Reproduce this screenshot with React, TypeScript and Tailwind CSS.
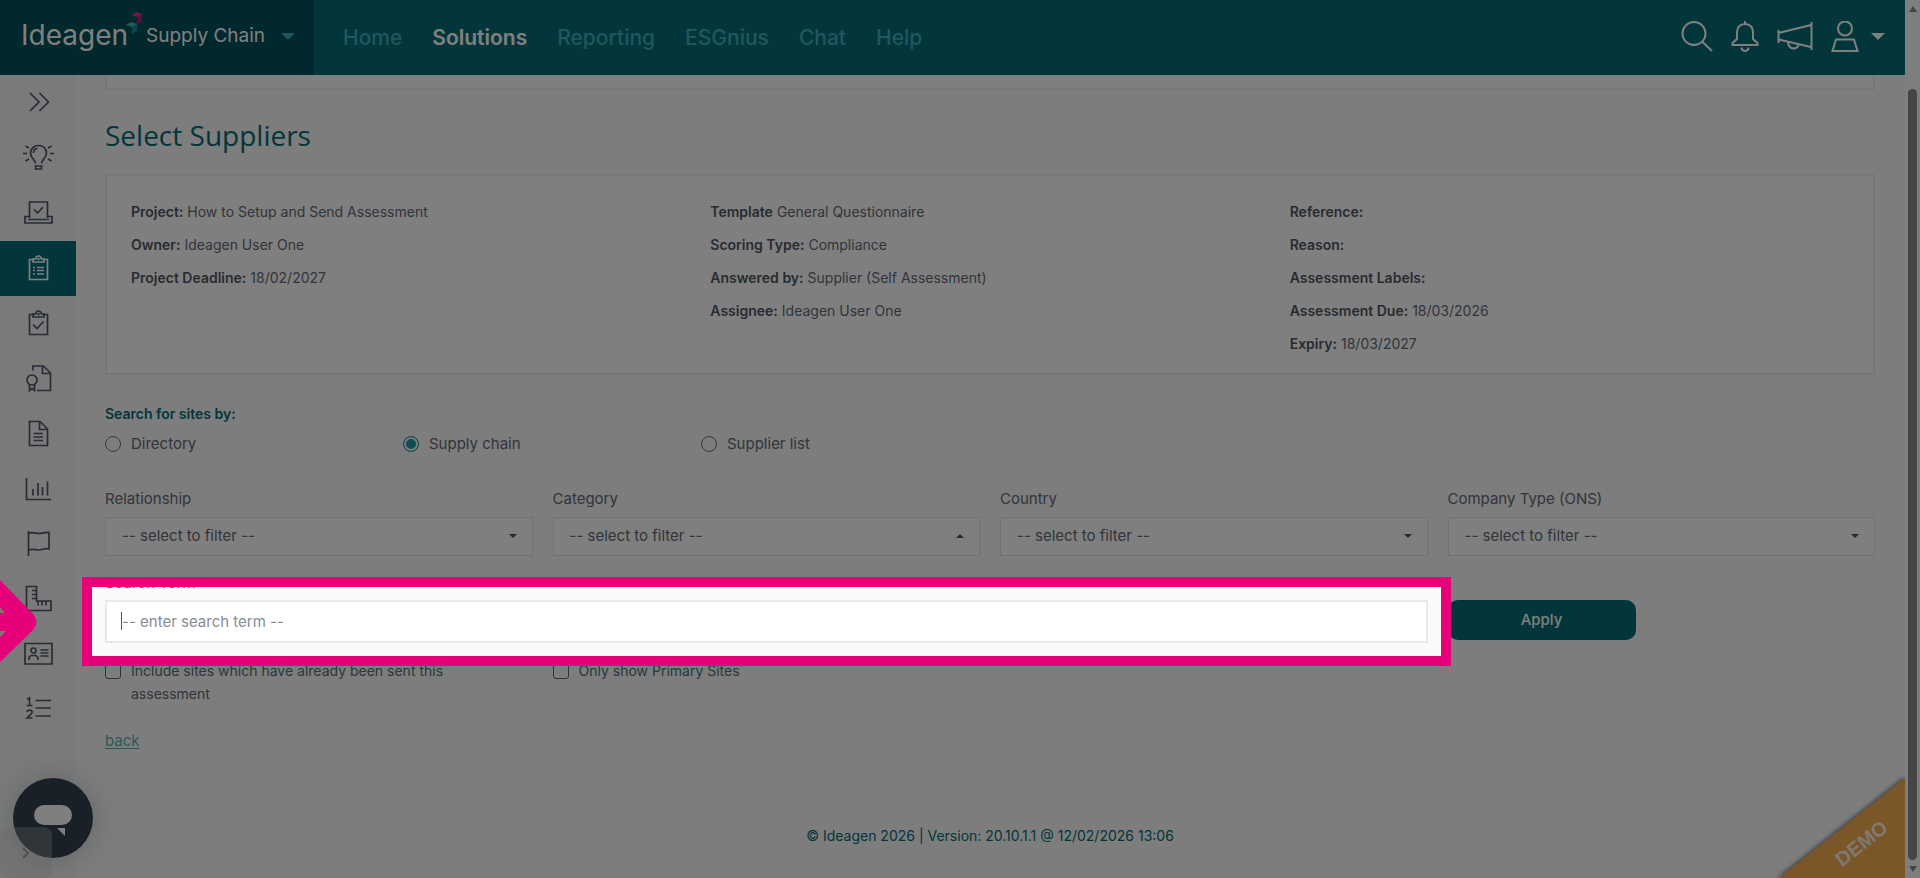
import React from "react";

const navLinks = ["Home", "Solutions", "Reporting", "ESGnius", "Chat", "Help"];

const details = [
  [
    { label: "Project:", value: "How to Setup and Send Assessment" },
    { label: "Owner:", value: "Ideagen User One" },
    { label: "Project Deadline:", value: "18/02/2027" },
  ],
  [
    { label: "Template", value: "General Questionnaire" },
    { label: "Scoring Type:", value: "Compliance" },
    { label: "Answered by:", value: "Supplier (Self Assessment)" },
    { label: "Assignee:", value: "Ideagen User One" },
  ],
  [
    { label: "Reference:", value: "" },
    { label: "Reason:", value: "" },
    { label: "Assessment Labels:", value: "" },
    { label: "Assessment Due:", value: "18/03/2026" },
    { label: "Expiry:", value: "18/03/2027" },
  ],
];

const filters = [
  { id: "relationship", label: "Relationship", open: false },
  { id: "category", label: "Category", open: true },
  { id: "country", label: "Country", open: false },
  { id: "company-type", label: "Company Type (ONS)", open: false },
];

const searchModes = ["Directory", "Supply chain", "Supplier list"];

const clipboardOutline = (
  <>
    <path d="M11 6.5H6.5v20h18v-20H20" />
    <path d="M10 9V6h2.5c.5-2.5 1.500-3 3-3s2.500.5 3 3H21v3z" />
    <circle cx="15.500" cy="6" r=".5" />
  </>
);

const sideItems = [
  {
    name: "Expand menu",
    icon: <path d="M7 5l9 9-9 9M16.500 5l9 9-9 9" />,
  },
  {
    name: "Insights",
    icon: (
      <>
        <path d="M12.500 20.500c0-4-5-5-5-10.500C7.500 5.500 11 2.500 15.500 2.500s8 3 8 7.500c0 5.500-5 6.500-5 10.500" />
        <path d="M10.500 10c0-2.500 1.500-4.500 4-4.500" />
        <path d="M12.500 23h6v3h-6z" />
        <path d="M0 10.500h4M27 10.500h4M2.500 3l3.500 2M28.500 3l-3.500 2M2.500 18l3.500-2M28.500 18l-3.500-2" />
      </>
    ),
  },
  {
    name: "Self assessment",
    icon: (
      <>
        <path d="M6.500 20V4h18v16" />
        <path d="M6 18.500H2V25h27v-6.500h-4.500M5 21.500h21" />
        <path d="M11 11.500l3.500 3.500 5.500-6" />
      </>
    ),
  },
  {
    name: "Assessments",
    icon: (
      <>
        {clipboardOutline}
        <path d="M10 14.500h2M14 14.500h7M10 17.500h2M14 17.500h7M10 21h2M14 21h7" />
      </>
    ),
  },
  {
    name: "Actions",
    icon: (
      <>
        {clipboardOutline}
        <path d="M10 16.500l4 4 6.500-7" />
      </>
    ),
  },
  {
    name: "Certificates",
    icon: (
      <>
        <path d="M10 7.500V3h10.500l7 7v17.500H14" />
        <path d="M19.500 3v7.500h8" />
        <circle cx="9" cy="17" r="5" />
        <path d="M6.500 21.500v6l2.500-2 2.500 2v-6" />
      </>
    ),
  },
  {
    name: "Documents",
    icon: (
      <>
        <path d="M6.500 3.500h10.500l7.500 7.500v16.500h-18z" />
        <path d="M16.500 3.500v8h8M10.500 15.500h9.500M10.500 19h9.500M10.500 22.500h9.500" />
      </>
    ),
  },
  {
    name: "Reports",
    icon: <path d="M3.500 5v21.500H28M10 16v6.500M15 10v12.500M19.500 14v8.500M24.500 8.500v14" />,
  },
  {
    name: "Flags",
    icon: (
      <path d="M5.500 3v25M5.500 5.500c4-2 7 0 10.500 0s6-1.500 10-1v16.500c-4-1.500-6.500 1-10 1s-6-1.500-10.500 0" />
    ),
  },
  {
    name: "Metrics",
    icon: (
      <>
        <path d="M3.500 3.500h10v14.500h14.500v9.500h-24.500z" />
        <path d="M9 7.500h4.500M9 11.500h4.500M9 15.500h4.500M15 18v4.500M19 18v4.500M23 18v4.500" />
      </>
    ),
  },
  {
    name: "Contacts",
    icon: (
      <>
        <path d="M2 5.500h27v20.500H2z" />
        <circle cx="10.500" cy="12.500" r="2.500" />
        <path d="M6 22v-2.500l2-2h5l2 2V22M17.500 12h8M17.500 15h8M17.500 18h8" />
      </>
    ),
  },
  {
    name: "Ordered list",
    icon: (
      <>
        <path d="M12.500 7.500h15.500M12.500 15h15.500M12.500 23h15.500" />
        <path d="M4 6.500l2.500-1.500V12.500M3.500 12.500h6M4 19c.5-2.500 5-2.500 5 0 0 2-2.500 3.500-5 6h5.500" />
      </>
    ),
  },
];

const SearchRow: React.FC = () => (
  <div className="mt-[5px] grid grid-cols-4 gap-x-5">
    <div className="relative col-span-3">
      <input
        id="search-term"
        type="text"
        placeholder="-- enter search term --"
        className="block h-[43px] w-full border-2 border-[#e6eaea] bg-white px-[15px] text-[15px] text-[#4b5563] outline-none placeholder:text-[#868d97]"
      />
      <span className="absolute left-4 top-3 h-[18px] w-px bg-[#4b5563]"></span>
      {/* spotlight: the ring's own shadow dims the rest of the page */}
      <div className="pointer-events-none absolute -inset-[23px] z-50 border-[10px] border-[#e6007a] shadow-[0_0_0_9999px_rgba(0,0,0,0.5)]"></div>
      <svg
        className="pointer-events-none absolute -left-[105px] -top-5 z-50 h-[82px] w-10"
        viewBox="0 0 40 82"
        fill="#e6007a"
        aria-hidden="true"
      >
        <path d="M0 0l33 34q7 8 0 16L0 82V57l6-6H0V33h5L0 27z" />
      </svg>
    </div>
    <button
      type="button"
      className="h-10 w-[188px] rounded-[10px] bg-[#066c76] text-[15px] font-medium text-white"
    >
      Apply
    </button>
  </div>
);

const App: React.FC = () => {
  return (
    <div className="flex h-screen overflow-hidden bg-[#fafafa] font-['Inter',sans-serif] text-[15px] text-[#626a77]">
      <div className="relative flex min-w-0 flex-1 flex-col">
        <header className="flex h-[75px] shrink-0 bg-[#066c76] text-white">
          <a href="#" className="flex w-[314px] items-center bg-[#025058] pb-0.5 pl-[21px]">
            <span className="pb-1 text-[28px] leading-[36px]">Ideagen</span>
            <svg className="-ml-0.5 mb-7 h-[22px] w-4 shrink-0" viewBox="0 0 16 22" aria-hidden="true">
              <path d="M5 3l5-3 6 2v7l-5 3V5z" fill="#e0338a" />
              <path d="M11 5l5-3v7l-5 3z" fill="#b81a70" />
              <path d="M0 13l5-3 6 2v6l-5 4v-7z" fill="#3fb6c2" />
              <path d="M6 15l5-3v6l-5 4z" fill="#0e8fa0" />
            </svg>
            <span className="ml-1 whitespace-nowrap text-[19px]">Supply Chain</span>
            <svg className="ml-4 h-[7px] w-[14px]" viewBox="0 0 14 7" fill="#36b0ba" aria-hidden="true">
              <path d="M0 0h14L7 7z" />
            </svg>
          </a>
          <nav className="flex items-center gap-[30px] pl-[29px] text-[21px]">
            {navLinks.map((link) => (
              <a
                key={link}
                href="#"
                className={link === "Solutions" ? "font-semibold text-white" : "font-medium text-[#3ab2bc]"}
              >
                {link}
              </a>
            ))}
          </nav>
          <div className="ml-auto flex items-center gap-[18px] pb-0.5 pr-5">
            <button type="button" aria-label="Search">
              <svg className="h-8 w-8" viewBox="0 0 32 32" fill="none" stroke="currentColor" strokeWidth="2">
                <circle cx="13" cy="12.500" r="11.500" />
                <path d="M21 20.500l10 9.500" />
              </svg>
            </button>
            <button type="button" aria-label="Notifications">
              <svg className="h-8 w-7" viewBox="0 0 28 32" fill="none" stroke="currentColor" strokeWidth="2">
                <path d="M14 0v3M14 3c-5 0-8 3.500-8 8v7l-4.500 4v2h25v-2L22 18v-7c0-4.500-3-8-8-8z" />
                <path d="M10.500 26.500c0 4.500 7 4.500 7 0" />
              </svg>
            </button>
            <button type="button" aria-label="Announcements">
              <svg className="h-8 w-9" viewBox="0 0 36 32" fill="none" stroke="currentColor" strokeWidth="2">
                <path d="M1.500 9v13M1.500 12L34 4M1.500 18.500L34 26M34.500 1v28" />
                <path d="M11 21c0 3 2 6.500 5.500 6.500 2.500 0 4.500-1.500 5-4" />
              </svg>
            </button>
            <button type="button" aria-label="Account" className="flex items-center gap-3">
              <svg className="h-8 w-7" viewBox="0 0 28 32" fill="none" stroke="currentColor" strokeWidth="2">
                <circle cx="14" cy="7.500" r="7" />
                <path d="M5 18.500h18l3.500 11.500h-25z" />
              </svg>
              <svg className="h-[7px] w-[14px]" viewBox="0 0 14 7" fill="currentColor">
                <path d="M0 0h14L7 7z" />
              </svg>
            </button>
          </div>
        </header>

        <div className="flex min-h-0 flex-1">
          <aside className="w-[75px] shrink-0 border-r border-[#f6f7f7] bg-[#f4f5f5] pt-px">
            {sideItems.map((item) => (
              <a
                key={item.name}
                href="#"
                aria-label={item.name}
                className={
                  item.name === "Assessments"
                    ? "flex h-[55px] w-[76px] items-center justify-center bg-[#066c76] pl-0.5 text-white"
                    : "flex h-[55px] w-[76px] items-center justify-center pl-0.5 text-[#4f5868]"
                }
              >
                <svg className="h-8 w-8" viewBox="0 0 32 32" fill="none" stroke="currentColor" strokeWidth="1.700">
                  {item.icon}
                </svg>
              </a>
            ))}
          </aside>

          <main className="min-w-0 flex-1 px-[30px]">
            <div className="h-[15px] border-2 border-t-0 border-[#eceeee] bg-white"></div>

            <h1 className="mb-[21px] mt-[27px] font-['Open_Sans',sans-serif] text-[28px] leading-[36px] text-[#066c76]">
              Select Suppliers
            </h1>

            <section className="grid grid-cols-3 border-2 border-[#eceeee] bg-white pb-[13px] pl-[9px] pr-[19px] pt-[19px] text-[14px] leading-[33px]">
              {details.map((column, index) => (
                <dl key={index} className="px-[15px]">
                  {column.map((row) => (
                    <div key={row.label} className="flex gap-1">
                      <dt className="font-semibold text-[#4f5765]">{row.label}</dt>
                      <dd>{row.value}</dd>
                    </div>
                  ))}
                </dl>
              ))}
            </section>

            <fieldset className="mt-[27px] leading-[24px]">
              <legend className="text-[14px] font-semibold text-[#066c76]">Search for sites by:</legend>
              <div className="mt-1.5 flex">
                {searchModes.map((mode) => (
                  <label key={mode} className="flex w-[298px] items-center gap-2.5">
                    <input
                      type="radio"
                      name="mode"
                      defaultChecked={mode === "Supply chain"}
                      className="size-4 appearance-none rounded-full border border-[#6b7280] checked:border-[#1e9aa5] checked:bg-[#1e9aa5] checked:shadow-[inset_0_0_0_2px_#fafafa]"
                    />
                    {mode}
                  </label>
                ))}
              </div>
            </fieldset>

            <div className="mt-[31px] grid grid-cols-4 gap-x-5">
              {filters.map((filter) => (
                <div key={filter.id}>
                  <label htmlFor={filter.id} className="block leading-[24px]">
                    {filter.label}
                  </label>
                  <div className="relative mt-1.5">
                    <select
                      id={filter.id}
                      className="block h-[39px] w-full appearance-none border border-[#e2e5e6] bg-white px-4"
                    >
                      <option>-- select to filter --</option>
                    </select>
                    <svg
                      className="pointer-events-none absolute right-4 top-[17px] h-1 w-2"
                      viewBox="0 0 8 4"
                      fill="#4b5563"
                      aria-hidden="true"
                    >
                      <path d={filter.open ? "M0 4h8L4 0z" : "M0 0h8L4 4z"} />
                    </svg>
                  </div>
                </div>
              ))}
            </div>

            <label htmlFor="search-term" className="mt-[15px] block leading-[24px]">
              Search Term
            </label>
            <SearchRow />

            <div className="mt-4 grid grid-cols-4 gap-x-5 text-[14px] leading-[23px]">
              <label className="flex items-start gap-2.5 pr-16">
                <input
                  type="checkbox"
                  className="mt-1 size-4 shrink-0 appearance-none rounded-[3px] border border-[#5b6370]"
                />
                Include sites which have already been sent this assessment
              </label>
              <label className="flex items-start gap-2.5">
                <input
                  type="checkbox"
                  className="mt-1 size-4 shrink-0 appearance-none rounded-[3px] border border-[#5b6370]"
                />
                Only show Primary Sites
              </label>
            </div>

            <a href="#" className="mt-6 inline-block leading-[24px] text-[#55b3b8] underline underline-offset-2">
              back
            </a>

            <footer className="mt-[71px] text-center text-[14px] leading-[24px] text-[#066c76]">
              © Ideagen 2026 | Version: 20.10.1.1 @ 12/02/2026 13:06
            </footer>
          </main>
        </div>

        <button
          type="button"
          aria-label="Open chat"
          className="absolute bottom-5 left-[13px] flex size-20 items-center justify-center rounded-full bg-[#33414e] shadow-[0_2px_30px_rgba(51,65,78,0.25)]"
        >
          <svg className="mt-1 h-8 w-10" viewBox="0 0 40 32" fill="#fff">
            <rect x="1" y="1" width="38" height="20" rx="10" />
            <path d="M24 24h8v8z" />
          </svg>
        </button>
        <div className="absolute bottom-0 left-0 flex h-[51px] w-[52px] items-center justify-center rounded-lg bg-[#c9c9ce]/30">
          <svg className="h-3 w-2" viewBox="0 0 8 12" fill="none" stroke="#8d9299" strokeWidth="1.500" aria-hidden="true">
            <path d="M1 1l5 5-5 5" />
          </svg>
        </div>

        <svg className="absolute bottom-0 right-0 h-[108px] w-[134px]" viewBox="0 0 134 108" aria-hidden="true">
          <path
            d="M8 108L134 8v100z"
            fill="#f4ac50"
            className="drop-shadow-[-1px_-1px_2px_rgba(0,0,0,0.5)]"
          />
          <text
            x="91"
            y="80"
            textAnchor="middle"
            transform="rotate(-38 91 74)"
            fill="#fff"
            fillOpacity=".85"
            className="font-['Liberation_Sans',sans-serif] text-[20px] font-bold"
          >
            DEMO
          </text>
        </svg>
      </div>

      {/* scrollbar gutter */}
      <div className="flex w-[15px] shrink-0 flex-col items-center justify-between bg-[#fcfcfc] py-1.5" aria-hidden="true">
        <svg className="h-1.5 w-2" viewBox="0 0 8 6" fill="#8a8a8a">
          <path d="M0 6L4 0l4 6z" />
        </svg>
        <div className="mb-1.5 mt-[77px] w-[9px] flex-1 rounded-full bg-[#8a8a8a]"></div>
        <svg className="h-1.5 w-2" viewBox="0 0 8 6" fill="#8a8a8a">
          <path d="M0 0h8L4 6z" />
        </svg>
      </div>
    </div>
  );
};

export default App;
